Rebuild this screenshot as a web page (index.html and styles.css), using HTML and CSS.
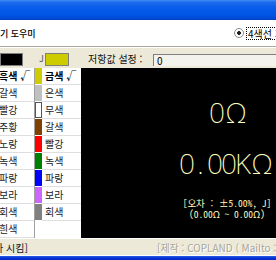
FILE: index.html
```html
<!DOCTYPE html>
<html lang="ko">
<head>
<meta charset="utf-8">
<title>저항 색띠 읽기 도우미</title>
<link rel="stylesheet" href="styles.css">
</head>
<body>
<div class="window">
  <div class="titlebar"></div>
  <div class="header">
    <div class="title">기 도우미</div>
    <div class="radio"><span class="radio-dot"></span><span class="radio-label">4색선 가변</span></div>
  </div>
  <div class="toolbar">
    <div class="swatch swatch-black"></div>
    <div class="tol-label">J</div>
    <div class="swatch swatch-gold"></div>
    <div class="field-label">저항값 설정 :</div>
    <div class="field">0</div>
  </div>
  <div class="main">
    <ul class="list list-left">
      <li class="row selected">흑색 √</li>
      <li class="row">갈색</li>
      <li class="row">빨강</li>
      <li class="row">주황</li>
      <li class="row">노랑</li>
      <li class="row">녹색</li>
      <li class="row">파랑</li>
      <li class="row">보라</li>
      <li class="row">회색</li>
      <li class="row">흰색</li>
    </ul>
    <ul class="list list-right">
      <li class="row"><span class="chip chip-gold"></span><span class="label selected">금색 √</span></li>
      <li class="row"><span class="chip chip-silver"></span><span class="label">은색</span></li>
      <li class="row"><span class="chip chip-none"></span><span class="label">무색</span></li>
      <li class="row"><span class="chip chip-brown"></span><span class="label">갈색</span></li>
      <li class="row"><span class="chip chip-red"></span><span class="label">빨강</span></li>
      <li class="row"><span class="chip chip-green"></span><span class="label">녹색</span></li>
      <li class="row"><span class="chip chip-blue"></span><span class="label">파랑</span></li>
      <li class="row"><span class="chip chip-violet"></span><span class="label">보라</span></li>
      <li class="row"><span class="chip chip-grey"></span><span class="label">회색</span></li>
    </ul>
    <div class="display">
      <div class="big big-first"><span class="ch">0</span><span class="ohm">Ω</span></div>
      <div class="big big-second"><span class="ch">0</span><span class="ch">.</span><span class="ch">0</span><span class="ch">0</span><span class="ch">K</span><span class="ohm">Ω</span></div>
      <div class="small small-first">[오차 : ±5.00%, J]</div>
      <div class="small small-second">(0.00Ω ~ 0.00Ω)</div>
    </div>
  </div>
  <div class="status">
    <div class="status-left"><span class="status-cut">하 시킴]</span></div>
    <div class="status-right">[제작 : COPLAND ( Mailto : copland@mail.net )]</div>
  </div>
  <div class="frame-bottom"></div>
</div>
</body>
</html>
```

FILE: styles.css
```css
html, body {
  margin: 0;
  padding: 0;
}
body {
  width: 276px;
  height: 260px;
  overflow: hidden;
  background: #ECE9D8;
  font-family: "Noto Sans CJK KR", "DejaVu Sans", sans-serif;
  font-size: 10px;
  color: #000;
}
.window {
  width: 373px;
  display: flex;
  flex-direction: column;
}
.titlebar {
  height: 20px;
  background: linear-gradient(to bottom, #3f8cf3 0%, #1d6ced 12%, #0a5de9 35%, #0057e6 70%, #004bd6 92%, #003cb8 100%);
}
.header {
  height: 26px;
  background: #fff;
  border-bottom: 1px solid #ACA899;
  display: grid;
  grid-template-columns: 234px 1fr;
  align-items: center;
}
.title {
  font-size: 9px;
  font-weight: 500;
  color: #000;
  white-space: nowrap;
}
.radio {
  display: flex;
  align-items: center;
  white-space: nowrap;
}
.radio-dot {
  width: 8px;
  height: 8px;
  border: 1px solid #8a8a8a;
  border-radius: 50%;
  background: radial-gradient(circle, #222 0 1.6px, #fff 2.2px);
  box-sizing: content-box;
}
.radio-label {
  margin-left: 3px;
  outline: 1px dotted #000;
  line-height: 11px;
  padding: 0 1px;
  font-size: 10px;
}
.toolbar {
  height: 20px;
  border-top: 1px solid #fff;
  display: flex;
  align-items: flex-start;
  white-space: nowrap;
}
.swatch {
  margin-top: 5px;
  height: 11px;
  border: 1px solid #7f7f7f;
}
.swatch-black {
  width: 21px;
  background: #000;
}
.tol-label {
  width: 6px;
  margin-left: 16px;
  margin-top: 5px;
  font-size: 9px;
  line-height: 12px;
  color: #555;
}
.swatch-gold {
  width: 22px;
  background: #CCCC00;
}
.field-label {
  width: 65px;
  margin-left: 19px;
  margin-top: 5px;
  line-height: 12px;
  font-size: 10px;
  color: #111;
}
.field {
  flex: 1;
  margin-top: 6px;
  height: 11px;
  line-height: 11px;
  border-top: 1px solid #7f7f7f;
  border-left: 1px solid #7f7f7f;
  background: #F3F2EC;
  padding-left: 3px;
  font-size: 10px;
}
.main {
  height: 170px;
  display: flex;
}
.list {
  list-style: none;
  margin: 0;
  padding: 0;
  background: #fff;
}
.list-left {
  width: 34px;
  border-right: 1px solid #A0A0A0;
  overflow: hidden;
}
.list-left .row {
  height: 16px;
  line-height: 16px;
  border-bottom: 1px solid #DEDEDE;
  text-indent: -1px;
  white-space: nowrap;
  color: #222;
}
.selected {
  font-weight: bold;
  color: #000 !important;
}
.list-right {
  width: 46px;
  overflow: hidden;
}
.list-right .row {
  height: 17px;
  display: flex;
}
.chip {
  width: 7px;
  height: 16px;
  box-sizing: border-box;
}
.chip-gold { background: #CCCC00; }
.chip-silver { background: #C0C0C0; }
.chip-none { background: #fff; border: 1px solid #555; }
.chip-brown { background: #804000; }
.chip-red { background: #FF0000; }
.chip-green { background: #008000; }
.chip-blue { background: #0000FF; }
.chip-violet { background: #CC66FF; }
.chip-grey { background: #808080; }
.label {
  flex: 1;
  height: 16px;
  line-height: 16px;
  border-bottom: 1px solid #DEDEDE;
  padding-left: 3px;
  white-space: nowrap;
  color: #222;
}
.display {
  flex: 1;
  background: #000;
  color: #FFFFC0;
  display: flex;
  flex-direction: column;
  align-items: center;
  padding-top: 30px;
  box-sizing: border-box;
}
.big {
  font-family: "Noto Sans", "DejaVu Sans", sans-serif;
  font-weight: 200;
  font-size: 28px;
  line-height: 28px;
  white-space: nowrap;
  display: flex;
}
.big-first {
  margin-left: 4px;
}
.big-second {
  margin-top: 23px;
}
.ch {
  display: inline-block;
  width: 14px;
  letter-spacing: -2px;
  text-indent: 1px;
  text-align: center;
}
.ohm {
  display: inline-block;
  width: 28px;
  text-align: center;
}
.small {
  font-family: "Noto Sans Mono CJK KR", "DejaVu Sans Mono", monospace;
  font-size: 9.5px;
  line-height: 10px;
  height: 10px;
  white-space: nowrap;
}
.small-first {
  margin-top: 21px;
}
.small-second {
  margin-top: 1px;
}
.status {
  height: 16px;
  border-top: 1px solid #fff;
  display: grid;
  grid-template-columns: 157px 1fr;
  align-items: center;
  white-space: nowrap;
  overflow: hidden;
}
.status-left {
  overflow: hidden;
}
.status-cut {
  display: inline-block;
  margin-left: -6px;
  color: #111;
}
.status-right {
  color: #A8A699;
  text-shadow: 1px 1px 0 #fff;
}
.frame-bottom {
  height: 5px;
  border-top: 1px solid #fff;
  background: linear-gradient(to bottom, #2a5fe0 0%, #0831D9 40%, #0022a8 100%);
}
```
